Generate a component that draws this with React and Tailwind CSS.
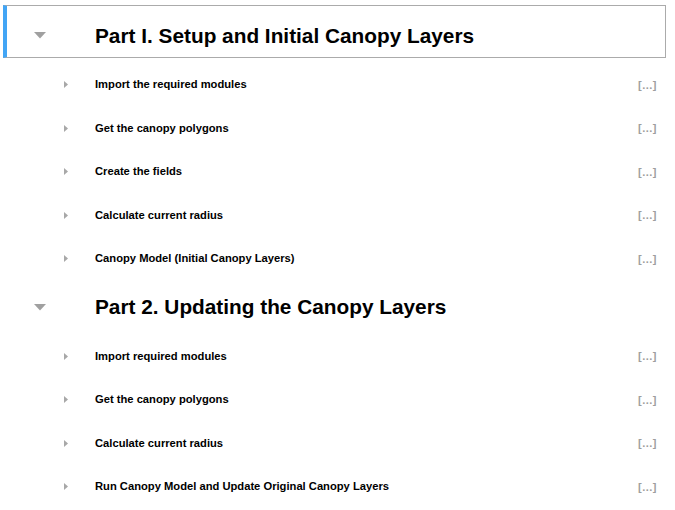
const part1 = [
  'Import the required modules',
  'Get the canopy polygons',
  'Create the fields',
  'Calculate current radius',
  'Canopy Model (Initial Canopy Layers)',
]

const part2 = [
  'Import required modules',
  'Get the canopy polygons',
  'Calculate current radius',
  'Run Canopy Model and Update Original Canopy Layers',
]

function Caret({ open }) {
  if (open) {
    return (
      <svg width="12" height="7" viewBox="0 0 12 7" className="block">
        <polygon points="0,0 12,0 6,6.5" fill="#a0a0a0" />
      </svg>
    )
  }
  return (
    <svg width="4" height="7" viewBox="0 0 4 7" className="block">
      <polygon points="0,0 4,3.5 0,7" fill="#a8a8a8" />
    </svg>
  )
}

function Item({ label }) {
  return (
    <div className="flex items-center h-[43.5px] pl-[61px] pr-[9px]">
      <div className="w-[31px]">
        <Caret />
      </div>
      <span className="flex-1 text-[11.2px] font-bold text-black">{label}</span>
      <span className="text-[11px] font-bold text-[#9e9e9e] tracking-[0.5px]">[...]</span>
    </div>
  )
}

export default function App() {
  return (
    <div className="w-[675px] h-[510px] bg-white pt-[5px] pl-[3px] pr-[9px]" style={{ fontFamily: '"Liberation Sans", Arial, sans-serif' }}>
      <div className="flex items-center h-[53px] pt-[10px] border border-[#ababab] border-l-[4px] border-l-[#42a5f5]">
        <div className="w-[88px] pl-[27px] -mt-[2px]">
          <Caret open />
        </div>
        <h1 className="text-[20.8px] font-bold text-black leading-none">Part I. Setup and Initial Canopy Layers</h1>
      </div>
      <div className="mt-[5px]">
        {part1.map((t, i) => <Item key={i} label={t} />)}
      </div>
      <div className="flex items-center h-[53px] pl-[4px]">
        <div className="w-[88px] pl-[27px]">
          <Caret open />
        </div>
        <h1 className="text-[20.8px] font-bold text-black leading-none">Part 2. Updating the Canopy Layers</h1>
      </div>
      <div className="mt-[1px]">
        {part2.map((t, i) => <Item key={i} label={t} />)}
      </div>
    </div>
  )
}
